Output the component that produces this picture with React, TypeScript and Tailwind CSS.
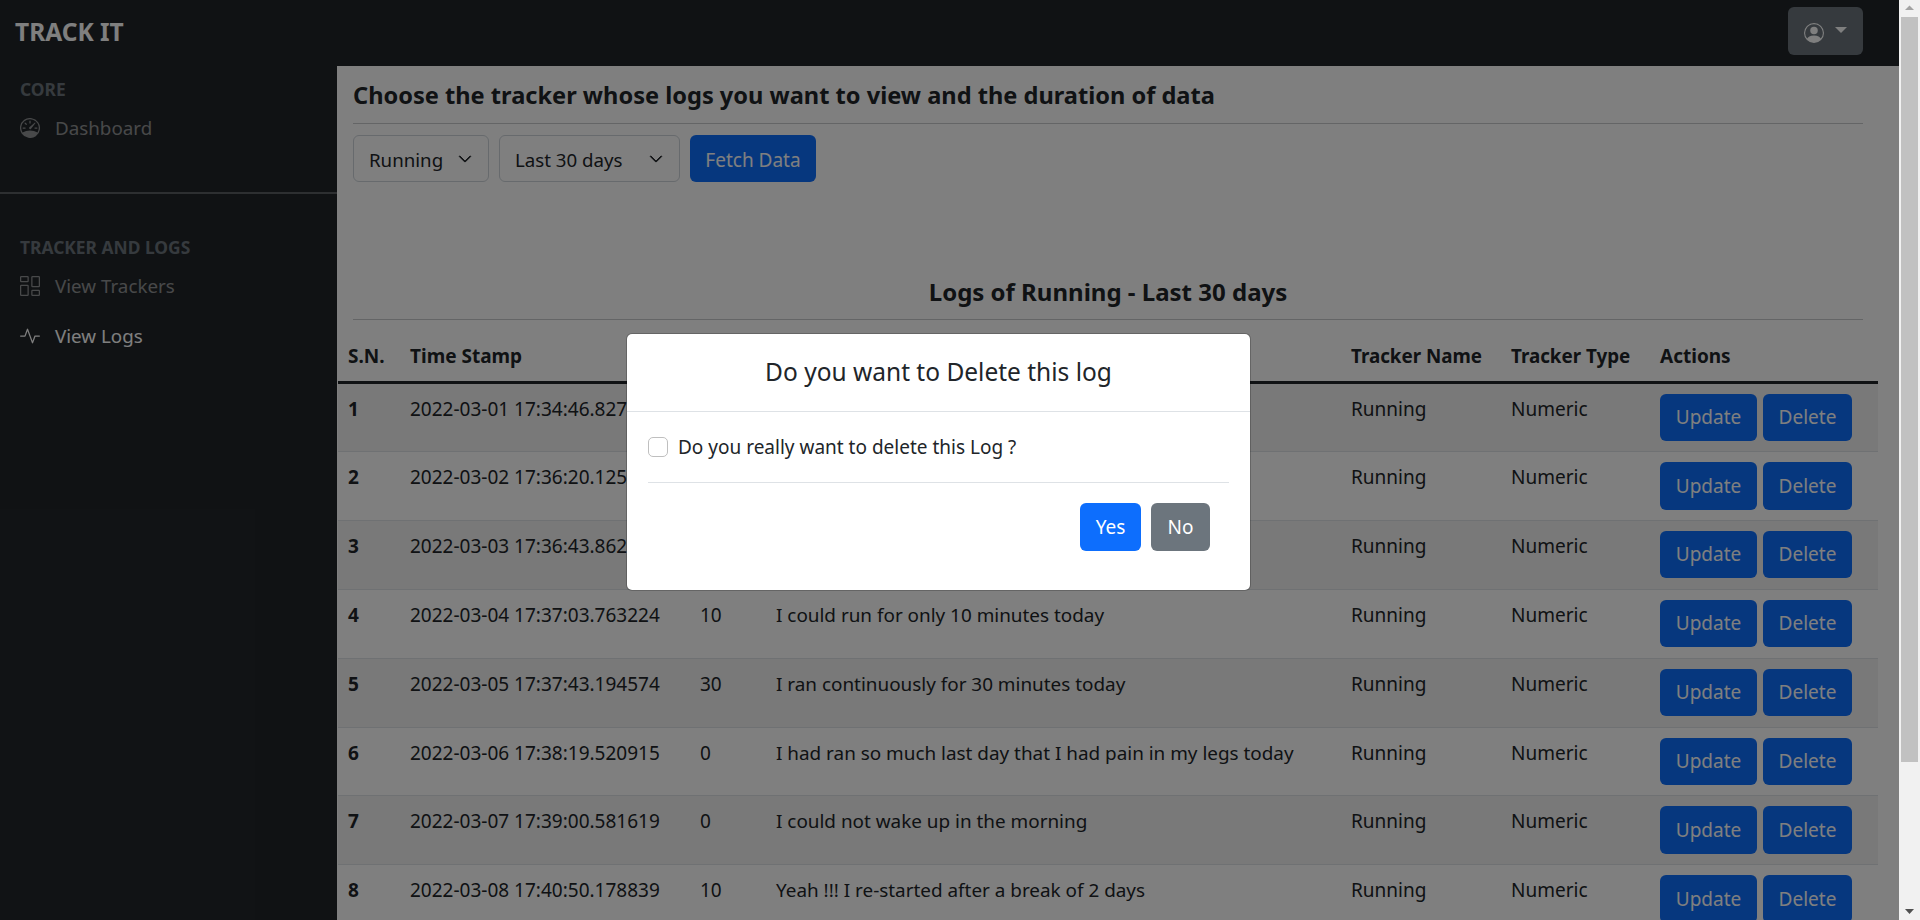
import React from "react";
import { BsSpeedometer, BsColumnsGap, BsActivity, BsPersonCircle, BsChevronDown } from "react-icons/bs";

const rows = [
  ["1", "2022-03-01 17:34:46.827", "", ""],
  ["2", "2022-03-02 17:36:20.125", "", ""],
  ["3", "2022-03-03 17:36:43.862", "", ""],
  ["4", "2022-03-04 17:37:03.763224", "10", "I could run for only 10 minutes today"],
  ["5", "2022-03-05 17:37:43.194574", "30", "I ran continuously for 30 minutes today"],
  ["6", "2022-03-06 17:38:19.520915", "0", "I had ran so much last day that I had pain in my legs today"],
  ["7", "2022-03-07 17:39:00.581619", "0", "I could not wake up in the morning"],
  ["8", "2022-03-08 17:40:50.178839", "10", "Yeah !!! I re-started after a break of 2 days"],
];

function NavItem({ icon, label, active }: { icon: React.ReactNode; label: string; active?: boolean }) {
  return (
    <div className={`flex items-center h-[50px] pl-5 text-[18.8px] ${active ? "text-white" : "text-white/50"}`}>
      <span className="w-[35px] flex items-center text-[20px]">{icon}</span>
      {label}
    </div>
  );
}

function Caret({ label, w }: { label: string; w: string }) {
  return (
    <div className={`h-[47px] ${w} flex items-center justify-between pl-[15px] pr-4 border border-[#ced4da] rounded-[6px] text-[18.7px] text-[#212529]`}>
      <span className="pt-[3px]">{label}</span>
      <BsChevronDown className="text-[14px]" strokeWidth={1} />
    </div>
  );
}

export default function App() {
  return (
    <div className="h-[920px] w-[1920px] overflow-hidden flex bg-white text-[#212529] font-['Noto_Sans','Open_Sans',sans-serif]">
      <div className="relative flex-1 min-w-0 flex flex-col overflow-hidden">
        <header className="h-[66px] shrink-0 bg-[#212529] flex items-center justify-between pl-[15px] pr-[36px]">
          <span className="text-[24.5px] font-bold text-white -mt-[2px]">TRACK IT</span>
          <div className="w-[75px] h-[48px] -mt-[4px] rounded-[6px] bg-[#6c757d] text-white flex items-center justify-center gap-[11px]">
            <BsPersonCircle className="text-[20px] mt-[3px]" />
            <span className="w-0 h-0 border-x-[6px] border-x-transparent border-t-[6px] border-t-white -mt-[3px]" />
          </div>
        </header>
        <div className="flex flex-1 min-h-0">
          <aside className="w-[337px] shrink-0 bg-[#212529] flex flex-col">
            <div className="pl-5 pt-[14px] h-[37px] text-[17.4px] font-bold text-[#6c757d] leading-[18px]">CORE</div>
            <NavItem icon={<BsSpeedometer />} label="Dashboard" />
            <div className="h-[2px] bg-[#5a5e62] mt-[39px]" />
            <div className="pl-5 mt-[44px] h-[23px] text-[17.4px] font-bold text-[#6c757d] leading-[18px]">TRACKER AND LOGS</div>
            <NavItem icon={<BsColumnsGap />} label="View Trackers" />
            <NavItem icon={<BsActivity />} label="View Logs" active />
          </aside>
          <main className="flex-1 min-w-0 flex flex-col">
            <div className="pl-[16px] pr-[36px]">
              <h5 className="h-[58px] flex items-center text-[23.6px] font-bold border-b border-[#c9cbcd] pt-[2px]">Choose the tracker whose logs you want to view and the duration of data</h5>
              <div className="flex gap-[10px] mt-[11px]">
                <Caret label="Running" w="w-[136px]" />
                <Caret label="Last 30 days" w="w-[181px]" />
                <div className="w-[126px] h-[47px] pt-[3px] rounded-[6px] bg-[#0d6efd] text-white text-[19px] flex items-center justify-center">Fetch Data</div>
              </div>
              <div className="h-[138px] flex items-end justify-center border-b border-[#c9cbcd] text-[24px] font-bold pb-[9px]">Logs of Running - Last 30 days</div>
            </div>
            <table className="table-fixed w-[1540px] ml-[1px] text-[19px] border-collapse">
              <colgroup>
                <col className="w-[62px]" />
                <col className="w-[290px]" />
                <col className="w-[76px]" />
                <col className="w-[575px]" />
                <col className="w-[160px]" />
                <col className="w-[149px]" />
                <col />
              </colgroup>
              <thead>
                <tr className="h-[62px] border-b-[3px] border-[#212529] font-bold text-left">
                  <th className="px-[10px] pt-[12px]">S.N.</th>
                  <th className="px-[10px] pt-[12px]">Time Stamp</th>
                  <th className="px-[10px] pt-[12px]"></th>
                  <th className="px-[10px] pt-[12px]"></th>
                  <th className="px-[10px] pt-[12px] text-[18.8px]">Tracker Name</th>
                  <th className="px-[10px] pt-[12px] text-[18.8px]">Tracker Type</th>
                  <th className="px-[10px] pt-[12px]">Actions</th>
                </tr>
              </thead>
              <tbody>
                {rows.map((r, i) => (
                  <tr key={r[0]} className={`h-[68.9px] border-b border-[#dee2e6] align-top ${i % 2 === 0 ? "bg-[#f2f2f2]" : "bg-white"}`}>
                    <td className="px-[10px] py-[11px] font-bold">{r[0]}</td>
                    <td className="px-[10px] py-[11px] whitespace-nowrap">{r[1]}</td>
                    <td className="px-[10px] py-[11px]">{r[2]}</td>
                    <td className="px-[10px] py-[11px] whitespace-nowrap text-[18.9px]">{r[3]}</td>
                    <td className="px-[10px] py-[11px]">Running</td>
                    <td className="px-[10px] py-[11px]">Numeric</td>
                    <td className="px-[10px] py-[10px]">
                      <div className="flex gap-[6px]">
                        <span className="w-[97px] h-[47.5px] rounded-[6px] bg-[#0d6efd] text-white flex items-center justify-center">Update</span>
                        <span className="w-[89px] h-[47.5px] rounded-[6px] bg-[#0d6efd] text-white flex items-center justify-center">Delete</span>
                      </div>
                    </td>
                  </tr>
                ))}
              </tbody>
            </table>
          </main>
        </div>
        <div className="absolute inset-0 bg-black/50" />
        <div className="absolute left-[626px] top-[333px] w-[625px] h-[258px] bg-white rounded-[6px] border border-black/20 bg-clip-padding">
          <div className="h-[78px] flex items-center justify-center text-[24.5px] border-b border-[#dee2e6]">Do you want to Delete this log</div>
          <div className="px-[21px]">
            <label className="h-[71px] flex items-center text-[19px] border-b border-[#dee2e6]">
              <span className="w-[20px] h-[20px] rounded-[5px] border border-[#bfbfbf] bg-white mr-[10px]" />
              Do you really want to delete this Log ?
            </label>
            <div className="flex justify-end gap-[10px] mt-[20px] pr-[19px] text-[19px]">
              <span className="w-[61px] h-[48px] rounded-[6px] bg-[#0d6efd] text-white flex items-center justify-center">Yes</span>
              <span className="w-[59px] h-[48px] rounded-[6px] bg-[#6c757d] text-white flex items-center justify-center">No</span>
            </div>
          </div>
        </div>
      </div>
      <div className="w-[21px] shrink-0 bg-[#f1f1f1] flex flex-col items-center">
        <svg width="17" height="17" viewBox="0 0 17 17" className="shrink-0"><path d="M4 10h9L8.500 5.500z" fill="#a3a3a3" /></svg>
        <div className="w-[17px] h-[745px] bg-[#c1c1c1]" />
        <div className="flex-1" />
        <svg width="17" height="17" viewBox="0 0 17 17" className="shrink-0"><path d="M4 6h9L8.500 11z" fill="#505050" /></svg>
      </div>
    </div>
  );
}
